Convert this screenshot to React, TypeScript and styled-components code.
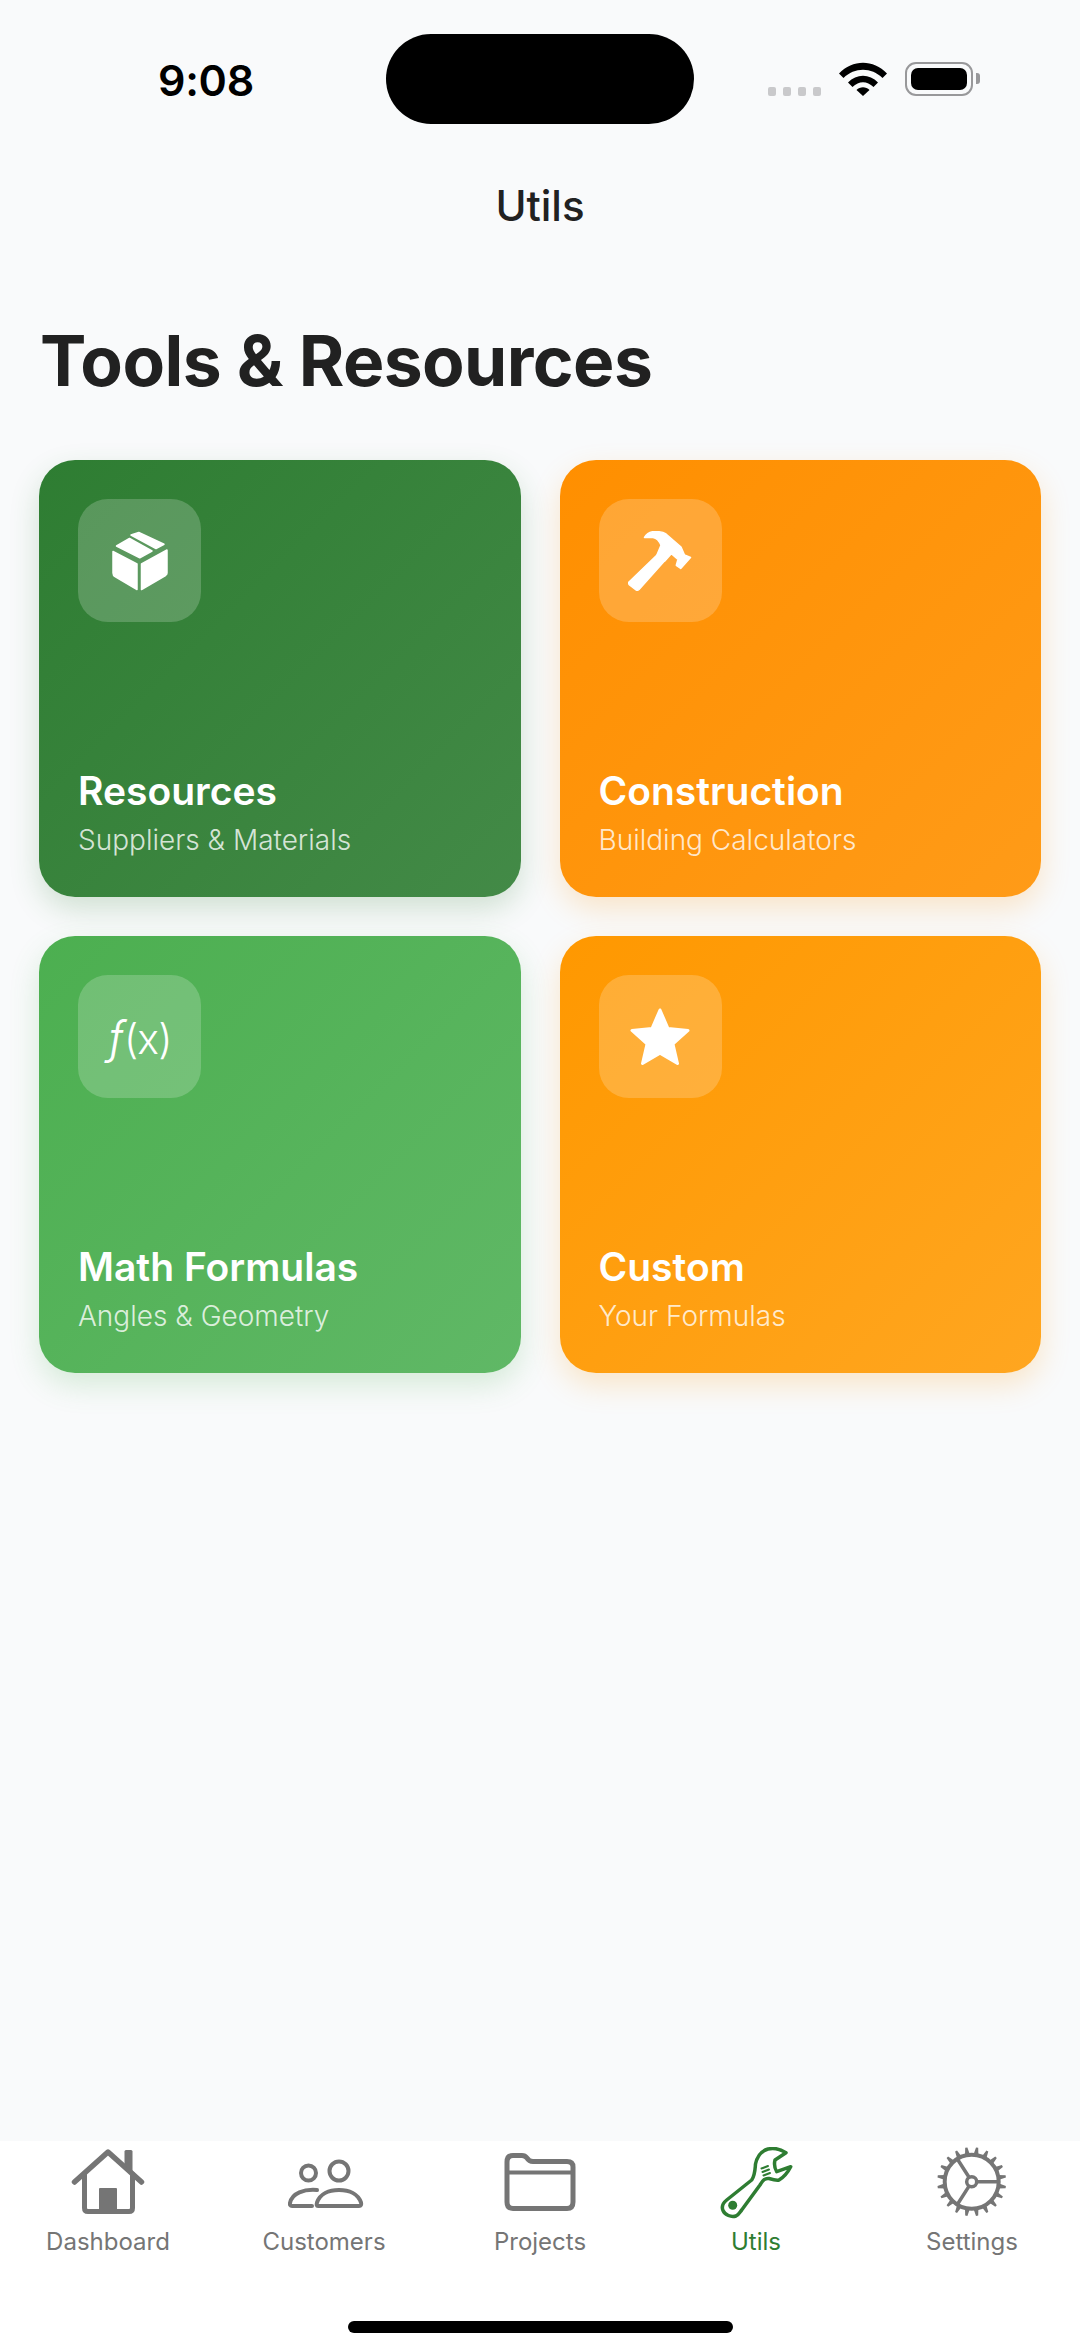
import React from "react";
import styled, { createGlobalStyle } from "styled-components";

const Global = createGlobalStyle`
  html, body { margin: 0; padding: 0; background: #f9fafb; }
  * { box-sizing: border-box; }
`;

const Page = styled.div`
  width: 1080px;
  height: 2347px;
  display: flex;
  flex-direction: column;
  background: #f9fafb;
  font-family: Inter, "Liberation Sans", sans-serif;
  color: #212121;
  overflow: hidden;
`;

const StatusBar = styled.div`
  height: 124px;
  margin-top: 34px;
  display: grid;
  grid-template-columns: 386px 308px 1fr;
`;

const Clock = styled.div`
  font-size: 43px;
  font-weight: 600;
  color: #000;
  line-height: 40px;
  padding: 26px 0 0 158px;
  letter-spacing: -0.3px;
`;

const Island = styled.div`
  height: 90px;
  border-radius: 45px;
  background: #000;
`;

const StatusIcons = styled.div`
  height: 34px;
  margin-top: 28px;
  padding-left: 74px;
  display: flex;
  align-items: flex-end;
`;

const SignalDots = styled.div`
  display: flex;
  gap: 7px;
  margin-right: 18px;
`;

const SignalDot = styled.span`
  width: 8px;
  height: 9px;
  border-radius: 2px;
  background: #c9c9cb;
`;

const Battery = styled.div`
  width: 68px;
  height: 34px;
  margin-left: 18px;
  padding: 4px;
  border: 2.5px solid #98989a;
  border-radius: 11px;
  position: relative;
  &::after {
    content: "";
    position: absolute;
    right: -9px;
    top: 9px;
    width: 4px;
    height: 11px;
    border-radius: 0 3px 3px 0;
    background: #98989a;
  }
`;

const BatteryFill = styled.div`
  width: 100%;
  height: 100%;
  border-radius: 7px;
  background: #000;
`;

const Header = styled.h1`
  margin: 0;
  height: 47px;
  line-height: 47px;
  margin-top: 24px;
  text-align: center;
  font-size: 42px;
  font-weight: 500;
  color: #212121;
`;

const Main = styled.main`
  flex: 1;
  padding: 92px 39px 0;
`;

const Heading = styled.h2`
  margin: 0 0 59px 1px;
  font-size: 69.500px;
  line-height: 80px;
  font-weight: 700;
  letter-spacing: -0.6px;
  color: #212121;
`;

const Grid = styled.div`
  display: grid;
  grid-template-columns: 1fr 1fr;
  grid-auto-rows: 437px;
  gap: 39px;
`;

const Card = styled.div<{ $from: string; $to: string; $shadow: string }>`
  border-radius: 36px;
  padding: 39px;
  display: flex;
  flex-direction: column;
  justify-content: space-between;
  background: linear-gradient(135deg, ${(p) => p.$from}, ${(p) => p.$to});
  box-shadow: 0 12px 30px ${(p) => p.$shadow};
`;

const IconBox = styled.div`
  width: 123px;
  height: 123px;
  border-radius: 30px;
  background: rgba(255, 255, 255, 0.2);
  display: flex;
  align-items: center;
  justify-content: center;
  color: #fff;
`;

const Fx = styled.span`
  font-size: 41px;
  font-weight: 300;
  color: #fff;
  line-height: 1;
  letter-spacing: -1px;
`;

const FxFn = styled.i`
  font-style: italic;
  font-size: 46px;
  margin-right: 1px;
`;

const CardText = styled.div`
  display: flex;
  flex-direction: column;
  gap: 11px;
  margin-bottom: 1px;
`;

const CardTitle = styled.div`
  font-size: 39px;
  line-height: 44px;
  font-weight: 600;
  color: #fff;
`;

const CardSub = styled.div`
  font-size: 28px;
  line-height: 33px;
  font-weight: 300;
  color: rgba(255, 255, 255, 0.8);
`;

const TabBar = styled.nav`
  height: 206px;
  background: #fff;
  display: flex;
  flex-direction: column;
`;

const Tabs = styled.div`
  display: grid;
  grid-template-columns: repeat(5, 216px);
  padding-top: 6px;
`;

const Tab = styled.div<{ $active?: boolean }>`
  display: flex;
  flex-direction: column;
  align-items: center;
  color: ${(p) => (p.$active ? "#2e7d32" : "#757575")};
`;

const TabLabel = styled.span`
  margin-top: 7px;
  font-size: 24px;
  line-height: 32px;
  font-weight: 400;
`;

const HomeIndicator = styled.div`
  width: 385px;
  height: 12px;
  border-radius: 6px;
  background: #000;
  margin: 63px auto 0;
`;

const WifiIcon = () => (
  <svg width="48" height="34" viewBox="0 0 48 34">
    <path d="M0 11.5C13.5-3 34.500-3 48 11.500L43.500 16C32.500 5 15.500 5 4.500 16Z" fill="#000" />
    <path d="M9 20.500C17.500 11.500 30.500 11.500 39 20.500L34.500 25C28 18.500 20 18.500 13.500 25Z" fill="#000" />
    <path d="M17.500 28C21 24.300 27 24.300 30.500 28L24 34Z" fill="#000" />
  </svg>
);

const BoxIcon = () => (
  <svg width="56" height="60" viewBox="0 -1 56 60" fill="#fff" stroke="#fff" strokeWidth="1.500" strokeLinejoin="round">
    <path d="M19 3L26.800 .5L52 12.300L44 16.500Z" />
    <path d="M4.500 14L17.500 6.500L40 19L27.800 25.800Z" />
    <path d="M1 19.500L25 32V57.500L3 44.500Q1 43.500 1 41Z" />
    <path d="M29.500 32L55 18V41Q55 42.500 53.500 43.500L29.500 57.500Z" />
  </svg>
);

const HammerIcon = () => (
  <svg width="64" height="60" viewBox="0 0 64 60" fill="#fff" stroke="#fff" strokeWidth="1.500" strokeLinejoin="round">
    <path d="M1 51L29 24L36 30.500L11 58.500Q9.500 59.800 8 58.800L1.500 54Q0 52.500 1 51Z" />
    <path d="M16.500 6.500Q20 .5 27 .5Q34 .5 38 3L53 16L56.500 24L62.500 26.500L52.700 37.500L48.300 34.300L50 28.300L43.300 22.700L36.600 30.300L29 23.700L33 14.300Q30 7 25 6.500Z" />
  </svg>
);

const StarIcon = () => (
  <svg width="62" height="60" viewBox="0 0 62 60" fill="#fff" stroke="#fff" strokeWidth="3" strokeLinejoin="round">
    <path d="M31 3L39 21.500L59 23.500L44 37L48.500 56.500L31 46.300L13.500 56.500L18 37L3 23.500L23 21.500Z" />
  </svg>
);

const TabSvg = styled.svg`
  width: 84px;
  height: 72px;
  display: block;
`;

const HomeIcon = () => (
  <TabSvg viewBox="0 0 84 72" fill="none" stroke="currentColor" strokeWidth="5" strokeLinecap="round" strokeLinejoin="round">
    <path d="M8.500 35L42 5L75.500 35" strokeWidth="5.500" />
    <path d="M18.500 27V61Q18.500 64.500 22 64.500H63Q66.500 64.500 66.500 61V27" />
    <path d="M34 41H50Q51 41 51 42V64H33V42Q33 41 34 41Z" fill="currentColor" stroke="none" />
    <path d="M58.500 4.500Q58.500 3 60 3H65Q66.500 3 66.500 4.500V25L58.500 18Z" fill="currentColor" stroke="none" />
  </TabSvg>
);

const PeopleIcon = () => (
  <TabSvg viewBox="0 0 84 72" fill="none" stroke="currentColor" strokeWidth="4" strokeLinecap="round" strokeLinejoin="round">
    <circle cx="26.500" cy="26" r="7.500" />
    <circle cx="57" cy="24" r="9.500" />
    <path d="M36 59H77Q80 59 79 55.500C76 47 67 43 57 43C47 43 38 47 35 55.500Q34 59 36 59Z" />
    <path d="M35 43C22 42 10 46 8 56Q7.500 59 10 59H30" />
  </TabSvg>
);

const FolderIcon = () => (
  <TabSvg viewBox="0 0 84 72" fill="none" stroke="currentColor" strokeWidth="5" strokeLinejoin="round">
    <path d="M9 15Q9 8.500 15 8.500H24Q27 8.500 29 11Q31 14.500 35 14.500H69Q75 14.500 75 20V55Q75 61.500 69 61.500H15Q9 61.500 9 55Z" />
    <path d="M9 25.500H75" strokeWidth="4" />
  </TabSvg>
);

const WrenchIcon = () => (
  <TabSvg viewBox="0 0 84 72" fill="none" stroke="currentColor" strokeWidth="3.500" strokeLinejoin="round" strokeLinecap="round">
    <path d="M72 5.700C66 2 60 .5 54 2C47 4 43 10 41.500 17C41 23 41 28 37.700 33L12.700 53C9 56 7.500 60 9 63.500C11 68 17 70.500 22 69C25 67.500 26 65 27.700 63L46 38C49 33 51 31 55 31.500C60 33 63 33.500 65 33C70 30 74 25 76.700 19.700L62.700 24.700C60.500 21 60 17 61 13Z" />
    <circle cx="18.700" cy="58.300" r="4.500" fill="currentColor" stroke="none" />
    <path d="M47.500 21.500L54 19M48.500 25L55 22.500M49.500 28.500L56 26" strokeWidth="2" />
  </TabSvg>
);

const gearTeeth = (() => {
  const cx = 41.7;
  const cy = 34.7;
  const n = 20;
  const s = (Math.PI * 2) / n;
  const p = (r: number, t: number) =>
    `${(cx + r * Math.cos(t)).toFixed(1)} ${(cy + r * Math.sin(t)).toFixed(1)}`;
  let d = "";
  for (let i = 0; i < n; i++) {
    const a = i * s - Math.PI / 2 + s / 2;
    d += `M${p(27.5, a - s * 0.28)}L${p(34.5, a - s * 0.1)}L${p(34.5, a + s * 0.1)}L${p(27.5, a + s * 0.28)}Z`;
  }
  return d;
})();

const GearIcon = () => (
  <TabSvg viewBox="0 0 84 72" fill="none" stroke="currentColor" strokeWidth="4" strokeLinejoin="round">
    <path d={gearTeeth} fill="currentColor" stroke="none" />
    <circle cx="41.700" cy="34.700" r="27" />
    <circle cx="41.700" cy="34.700" r="5" strokeWidth="3.500" />
    <path d="M47 34.700H67M38.900 30L27 11.500M38.900 39.400L27 58" strokeWidth="3.500" />
  </TabSvg>
);

const cards = [
  { title: "Resources", sub: "Suppliers & Materials", from: "#2e7d32", to: "#438a47", shadow: "rgba(46,125,50,0.2)", icon: <BoxIcon /> },
  { title: "Construction", sub: "Building Calculators", from: "#ff8f00", to: "#ff9b18", shadow: "rgba(255,143,0,0.2)", icon: <HammerIcon /> },
  { title: "Math Formulas", sub: "Angles & Geometry", from: "#4caf50", to: "#60b866", shadow: "rgba(76,175,80,0.2)", icon: <Fx><FxFn>ƒ</FxFn>(x)</Fx> },
  { title: "Custom", sub: "Your Formulas", from: "#ff9800", to: "#ffa620", shadow: "rgba(255,152,0,0.2)", icon: <StarIcon /> },
];

const tabs = [
  { label: "Dashboard", icon: <HomeIcon /> },
  { label: "Customers", icon: <PeopleIcon /> },
  { label: "Projects", icon: <FolderIcon /> },
  { label: "Utils", icon: <WrenchIcon />, active: true },
  { label: "Settings", icon: <GearIcon /> },
];

export default function App() {
  return (
    <Page>
      <Global />
      <StatusBar>
        <Clock>9:08</Clock>
        <Island />
        <StatusIcons>
          <SignalDots>
            {[0, 1, 2, 3].map((i) => (
              <SignalDot key={i} />
            ))}
          </SignalDots>
          <WifiIcon />
          <Battery>
            <BatteryFill />
          </Battery>
        </StatusIcons>
      </StatusBar>
      <Header>Utils</Header>
      <Main>
        <Heading>Tools &amp; Resources</Heading>
        <Grid>
          {cards.map((c) => (
            <Card key={c.title} $from={c.from} $to={c.to} $shadow={c.shadow}>
              <IconBox>{c.icon}</IconBox>
              <CardText>
                <CardTitle>{c.title}</CardTitle>
                <CardSub>{c.sub}</CardSub>
              </CardText>
            </Card>
          ))}
        </Grid>
      </Main>
      <TabBar>
        <Tabs>
          {tabs.map((t) => (
            <Tab key={t.label} $active={t.active}>
              {t.icon}
              <TabLabel>{t.label}</TabLabel>
            </Tab>
          ))}
        </Tabs>
        <HomeIndicator />
      </TabBar>
    </Page>
  );
}
